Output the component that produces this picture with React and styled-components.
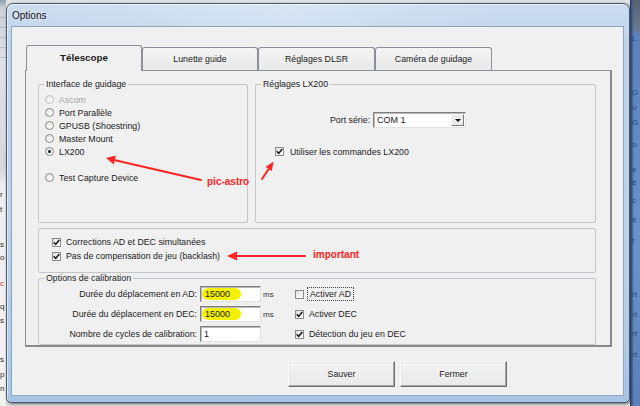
import React from 'react';
import styled, { createGlobalStyle } from 'styled-components';

const GlobalStyle = createGlobalStyle`
  html, body {
    margin: 0;
    padding: 0;
    background: #6c8fbf;
  }
  body {
    width: 640px;
    height: 406px;
    overflow: hidden;
    font-family: 'Liberation Sans', Arial, sans-serif;
    color: #1b1b1b;
  }
`;

const Desktop = styled.div`
  position: relative;
  display: flex;
  width: 640px;
  height: 406px;
  overflow: hidden;
  background: #dfe3e8;
`;

const LeftStrip = styled.div`
  flex: none;
  width: 6px;
  display: flex;
  flex-direction: column;
  overflow: hidden;
  background:
    repeating-linear-gradient(180deg, transparent 0 9px, rgba(120, 130, 145, 0.35) 9px 10px) 0 8px / 100% 50px no-repeat,
    linear-gradient(180deg, #8f9cab 0, #c9d0d8 8px, #dfe2e6 60px, #d4d7db 170px, #eeeeee 185px, #f3f3f3 100%);
`;

const RightStrip = styled.div`
  flex: 1;
  display: flex;
  flex-direction: column;
  overflow: hidden;
  background:
    linear-gradient(90deg, #24354d 0, #3e5f91 2px, transparent 4px),
    linear-gradient(180deg, #55606e 0, #6a7a90 30px, #5d82bb 34px, #6d92c8 60%, #5b7fb6 100%);
`;

const Ghost = styled.span`
  display: block;
  margin-top: ${p => p.$gap}px;
  margin-left: ${p => p.$shift || 0}px;
  font-size: 8px;
  line-height: 10px;
  white-space: nowrap;
  color: ${p => p.$color || '#2d2d2d'};
`;

const Window = styled.div`
  flex: none;
  box-sizing: border-box;
  width: 624px;
  height: 400px;
  margin-top: 3px;
  padding: 0 5px 6px 4px;
  display: flex;
  flex-direction: column;
  border: 1px solid #4a5a6e;
  border-radius: 7px 7px 5px 5px;
  background: linear-gradient(180deg, #cbdcef 0%, #bfd4ec 10%, #b9d0ea 70%, #a7c4e6 100%);
  box-shadow: 1px 1px 3px rgba(0, 0, 0, 0.55), inset 1px 1px 0 rgba(255, 255, 255, 0.6);
`;

const TitleBar = styled.div`
  height: 22px;
  display: flex;
  align-items: center;
  padding-left: 1px;
  font-size: 10px;
  color: #111;
  text-shadow: 0 0 5px rgba(255, 255, 255, 0.9);
  background: linear-gradient(90deg, rgba(255, 255, 255, 0) 0, rgba(255, 255, 255, 0.25) 45%, rgba(255, 255, 255, 0) 80%);
`;

const Client = styled.div`
  flex: 1;
  display: flex;
  flex-direction: column;
  padding: 18px 11px 0 13px;
  background: #f0f0f0;
  border: 1px solid #8fa3b9;
`;

const TabStrip = styled.div`
  position: relative;
  z-index: 1;
  display: flex;
  align-items: flex-end;
  height: 25px;
  padding-left: 1px;
`;

const Tab = styled.div`
  box-sizing: border-box;
  width: ${p => p.$w}px;
  height: ${p => (p.$active ? 26 : 23)}px;
  margin-bottom: ${p => (p.$active ? -1 : 0)}px;
  display: flex;
  align-items: center;
  justify-content: center;
  padding-bottom: ${p => (p.$active ? 2 : 0)}px;
  border: 1px solid #8c8f96;
  border-bottom: none;
  border-radius: 3px 3px 0 0;
  background: ${p => (p.$active ? '#f0f0f0' : 'linear-gradient(180deg, #f4f4f4, #e9e9e9)')};
  font-size: ${p => (p.$active ? '9.8px' : '8.8px')};
  font-weight: ${p => (p.$active ? 700 : 400)};
`;

const Panel = styled.div`
  box-sizing: border-box;
  height: 277px;
  display: flex;
  flex-direction: column;
  padding: 8px 14px 0 12px;
  border: 1px solid #8e9196;
  border-right: 2px solid #8a8a8a;
  border-bottom: 2px solid #8a8a8a;
  background: #f0f0f0;
`;

const TopRow = styled.div`
  display: flex;
  gap: 7px;
  height: 144px;
`;

const Group = styled.fieldset`
  box-sizing: border-box;
  margin: ${p => p.$mt || 0}px 0 0;
  padding: 0;
  min-width: 0;
  width: ${p => (p.$w ? `${p.$w}px` : 'auto')};
  flex: ${p => (p.$w ? 'none' : '1')};
  height: ${p => (p.$h ? `${p.$h}px` : 'auto')};
  border: 1px solid #c3c5c8;
  border-radius: 2px;
`;

const Legend = styled.legend`
  margin-left: 5px;
  padding: 0 2px;
  font-size: 8.8px;
  line-height: 11px;
`;

const RadioList = styled.div`
  display: flex;
  flex-direction: column;
  padding: 3px 0 0 6px;
`;

const OptionRow = styled.label`
  display: flex;
  align-items: center;
  gap: ${p => p.$gap || 5}px;
  height: ${p => p.$h || 13}px;
  margin-top: ${p => p.$top || 0}px;
  padding-left: ${p => p.$indent || 0}px;
  font-size: 8.8px;
  white-space: nowrap;
  color: ${p => (p.$disabled ? '#a3a3a3' : '#1b1b1b')};
`;

const Radio = styled.span`
  box-sizing: border-box;
  flex: none;
  width: 9px;
  height: 9px;
  display: flex;
  align-items: center;
  justify-content: center;
  border-radius: 50%;
  border: 1px solid ${p => (p.$disabled ? '#c2c2c2' : '#8a8a8a')};
  background: radial-gradient(circle at 65% 65%, #ffffff 0, #f2f2f2 40%, #d8d8d8 100%);

  &::after {
    content: '';
    display: ${p => (p.$checked ? 'block' : 'none')};
    width: 3px;
    height: 3px;
    border-radius: 50%;
    background: #1a1a1a;
  }
`;

const Box = styled.span`
  box-sizing: border-box;
  flex: none;
  width: 9px;
  height: 9px;
  display: flex;
  align-items: center;
  justify-content: center;
  border: 1px solid #8c8c8c;
  background: linear-gradient(135deg, #dedede 0, #f6f6f6 60%, #ffffff 100%);
`;

const Focus = styled.span`
  padding: 0 1px;
  outline: 1px dotted #444;
  outline-offset: 1px;
`;

const PortRow = styled.div`
  display: flex;
  align-items: center;
  gap: 3px;
  height: 16px;
  margin-top: 22px;
  padding-left: 74px;
  font-size: 8.8px;
`;

const Sunken = styled.div`
  box-sizing: border-box;
  display: flex;
  align-items: center;
  width: ${p => p.$w}px;
  height: 16px;
  background: #fff;
  border: 1px solid;
  border-color: #7f7f7f #e2e2e2 #e2e2e2 #7f7f7f;
  box-shadow: inset 1px 1px 0 #b9b9b9;
  font-size: 9px;
`;

const FieldText = styled.span`
  flex: 1;
  padding-left: 3px;
`;

const DropButton = styled.span`
  box-sizing: border-box;
  flex: none;
  width: 13px;
  height: 12px;
  margin-right: 1px;
  display: flex;
  align-items: center;
  justify-content: center;
  background: #ececec;
  border: 1px solid;
  border-color: #fdfdfd #7a7a7a #7a7a7a #fdfdfd;

  &::after {
    content: '';
    border-left: 3px solid transparent;
    border-right: 3px solid transparent;
    border-top: 3px solid #111;
    margin-top: 1px;
  }
`;

const CheckList = styled.div`
  display: flex;
  flex-direction: column;
  padding: 6px 0 0 13px;
`;

const CalibRow = styled.div`
  display: flex;
  align-items: center;
  height: 20px;
  font-size: 8.8px;
  white-space: nowrap;
`;

const CalibLabel = styled.span`
  flex: none;
  width: 158px;
  margin-right: 3px;
  text-align: right;
`;

const Unit = styled.span`
  flex: none;
  width: 32px;
  padding-left: 2px;
  font-size: 8px;
  color: #333;
`;

const Highlight = styled.span`
  margin-left: -2px;
  padding: 1px 11px 1px 3px;
  border-radius: 7px;
  background: #f4f000;
`;

const ButtonRow = styled.div`
  display: flex;
  gap: 5px;
  margin-top: 14px;
  padding-left: 263px;
`;

const Button = styled.div`
  box-sizing: border-box;
  width: 107px;
  height: 26px;
  display: flex;
  align-items: center;
  justify-content: center;
  font-size: 8.8px;
  background: linear-gradient(180deg, #f3f3f3, #eaeaea);
  border: 1px solid;
  border-color: #fbfbfb #6b6b6b #6b6b6b #fbfbfb;
  box-shadow: inset -1px -1px 0 #a8a8a8, inset 1px 1px 0 #e6e6e6;
`;

const Overlay = styled.svg`
  position: absolute;
  left: 0;
  top: 0;
  pointer-events: none;
`;

const Annotation = styled.span`
  position: absolute;
  left: ${p => p.$x}px;
  top: ${p => p.$y}px;
  font-size: 10px;
  font-weight: 700;
  color: #ff2424;
  white-space: nowrap;
`;

const CheckMark = () => (
  <svg width="7" height="7" viewBox="0 0 7 7">
    <path d="M0.7 3.3 L2.7 5.4 L6.3 1.1" fill="none" stroke="#111" strokeWidth="1.5" />
  </svg>
);

const Checkbox = ({ checked }) => <Box>{checked && <CheckMark />}</Box>;

const tabs = [
  { label: 'Télescope', w: 116 },
  { label: 'Lunette guide', w: 116 },
  { label: 'Réglages DLSR', w: 117 },
  { label: 'Caméra de guidage', w: 117 },
];

const interfaces = [
  { label: 'Ascom', disabled: true },
  { label: 'Port Parallèle' },
  { label: 'GPUSB (Shoestring)' },
  { label: 'Master Mount' },
  { label: 'LX200', checked: true },
  { label: 'Test Capture Device', top: 13 },
];

const calibration = [
  { label: 'Durée du déplacement en AD:', value: '15000', unit: 'ms', check: 'Activer AD', checked: false, focus: true, mark: true },
  { label: 'Durée du déplacement en DEC:', value: '15000', unit: 'ms', check: 'Activer DEC', checked: true, mark: true },
  { label: 'Nombre de cycles de calibration:', value: '1', unit: '', check: 'Détection du jeu en DEC', checked: true },
];

const leftGhosts = [
  { t: 'r', y: 190 }, { t: 't', y: 205 }, { t: 's', y: 240 }, { t: 'o', y: 253 },
  { t: 'c', y: 279, color: '#d23a1a' }, { t: 'q', y: 302 }, { t: 's', y: 316 },
  { t: 's', y: 355 }, { t: 'p', y: 370 }, { t: 'n', y: 384 },
];

const rightGhosts = [
  { t: 'L', y: 34 }, { t: 'G', y: 88 }, { t: 'u', y: 103 }, { t: 'G', y: 118 },
  { t: 'o', y: 140 }, { t: 'e', y: 165 }, { t: 'é', y: 178 }, { t: 'c', y: 196 },
  { t: 'e', y: 215 }, { t: 't', y: 236 }, { t: 'rt', y: 290 }, { t: 'rt', y: 310 },
  { t: 'rt', y: 329 }, { t: 'rt', y: 350 },
];

const withGaps = list =>
  list.map((g, i) => ({ ...g, gap: i === 0 ? g.y : g.y - list[i - 1].y - 10 }));

export default function App() {
  return (
    <>
      <GlobalStyle />
      <Desktop>
        <LeftStrip>
          {withGaps(leftGhosts).map((g, i) => (
            <Ghost key={i} $gap={g.gap} $color={g.color}>{g.t}</Ghost>
          ))}
        </LeftStrip>

        <Window>
          <TitleBar>Options</TitleBar>
          <Client>
            <TabStrip>
              {tabs.map((t, i) => (
                <Tab key={t.label} $w={t.w} $active={i === 0}>{t.label}</Tab>
              ))}
            </TabStrip>

            <Panel>
              <TopRow>
                <Group $w={210}>
                  <Legend>Interface de guidage</Legend>
                  <RadioList>
                    {interfaces.map(it => (
                      <OptionRow key={it.label} $top={it.top} $disabled={it.disabled}>
                        <Radio $checked={it.checked} $disabled={it.disabled} />
                        {it.label}
                      </OptionRow>
                    ))}
                  </RadioList>
                </Group>

                <Group>
                  <Legend>Réglages LX200</Legend>
                  <PortRow>
                    <span>Port série:</span>
                    <Sunken $w={93}>
                      <FieldText>COM 1</FieldText>
                      <DropButton />
                    </Sunken>
                  </PortRow>
                  <OptionRow $top={17} $indent={19} $gap={6}>
                    <Checkbox checked />
                    Utiliser les commandes LX200
                  </OptionRow>
                </Group>
              </TopRow>

              <Group $h={40} $mt={5}>
                <CheckList>
                  <OptionRow $h={14}>
                    <Checkbox checked />
                    Corrections AD et DEC simultanées
                  </OptionRow>
                  <OptionRow $h={14}>
                    <Checkbox checked />
                    Pas de compensation de jeu (backlash)
                  </OptionRow>
                </CheckList>
              </Group>

              <Group $h={74}>
                <Legend>Options de calibration</Legend>
                {calibration.map(row => (
                  <CalibRow key={row.label}>
                    <CalibLabel>{row.label}</CalibLabel>
                    <Sunken $w={61}>
                      <FieldText>
                        {row.mark ? <Highlight>{row.value}</Highlight> : row.value}
                      </FieldText>
                    </Sunken>
                    <Unit>{row.unit}</Unit>
                    <OptionRow $gap={5}>
                      <Checkbox checked={row.checked} />
                      {row.focus ? <Focus>{row.check}</Focus> : row.check}
                    </OptionRow>
                  </CalibRow>
                ))}
              </Group>
            </Panel>

            <ButtonRow>
              <Button>Sauver</Button>
              <Button>Fermer</Button>
            </ButtonRow>
          </Client>
        </Window>

        <RightStrip>
          {withGaps(rightGhosts).map((g, i) => (
            <Ghost key={i} $gap={g.gap} $shift={2} $color="#23457d">{g.t}</Ghost>
          ))}
        </RightStrip>

        <Overlay width="640" height="406" viewBox="0 0 640 406">
          <g fill="#ff2424" stroke="#ff2424" strokeLinecap="round">
            <line x1="201" y1="180" x2="114" y2="160" strokeWidth="2" />
            <polygon points="106,158 115.7,155.6 113.9,164.4" stroke="none" />
            <line x1="262" y1="179" x2="269" y2="168.5" strokeWidth="2" />
            <polygon points="273.5,161.5 271.8,171 265.6,167" stroke="none" />
            <line x1="305" y1="256" x2="236" y2="256" strokeWidth="2" />
            <polygon points="227,256 237,251.5 237,260.5" stroke="none" />
          </g>
        </Overlay>
        <Annotation $x={207} $y={176}>pic-astro</Annotation>
        <Annotation $x={313} $y={249}>important</Annotation>
      </Desktop>
    </>
  );
}
